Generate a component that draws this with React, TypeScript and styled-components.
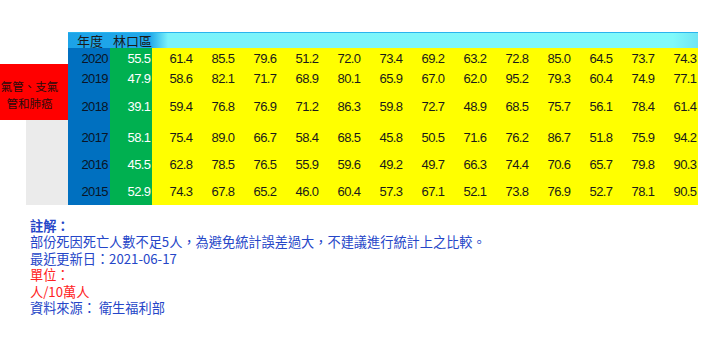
import React from 'react';
import styled, { createGlobalStyle } from 'styled-components';

const GlobalStyle = createGlobalStyle`
    html, body {
        margin: 0;
        padding: 0;
        background: #ffffff;
    }
`;

const COL = 42;

const years = [2020, 2019, 2018, 2017, 2016, 2015];
const local = ['55.5', '47.9', '39.1', '58.1', '45.5', '52.9'];
const rows = [
    ['61.4', '85.5', '79.6', '51.2', '72.0', '73.4', '69.2', '63.2', '72.8', '85.0', '64.5', '73.7', '74.3'],
    ['58.6', '82.1', '71.7', '68.9', '80.1', '65.9', '67.0', '62.0', '95.2', '79.3', '60.4', '74.9', '77.1'],
    ['59.4', '76.8', '76.9', '71.2', '86.3', '59.8', '72.7', '48.9', '68.5', '75.7', '56.1', '78.4', '61.4'],
    ['75.4', '89.0', '66.7', '58.4', '68.5', '45.8', '50.5', '71.6', '76.2', '86.7', '51.8', '75.9', '94.2'],
    ['62.8', '78.5', '76.5', '55.9', '59.6', '49.2', '49.7', '66.3', '74.4', '70.6', '65.7', '79.8', '90.3'],
    ['74.3', '67.8', '65.2', '46.0', '60.4', '57.3', '67.1', '52.1', '73.8', '76.9', '52.7', '78.1', '90.5'],
];
const rowHeights = [20, 20, 36, 26, 28, 27];

const Page = styled.div`
    padding-top: 32px;
    width: 720px;
    height: 364px;
    box-sizing: border-box;
`;

const TopRow = styled.div`
    display: flex;
    align-items: flex-start;
`;

const SideColumn = styled.div`
    display: flex;
    flex-direction: column;
    width: 68px;
    padding-top: 32px;
`;

const CauseBox = styled.div`
    height: 56px;
    background: #ff0000;
    color: #2a0c0c;
    font-family: "Noto Sans CJK TC", sans-serif;
    font-size: 11.5px;
    line-height: 17px;
    text-align: center;
    padding: 14px 9px 0 0;
    box-sizing: border-box;
    white-space: nowrap;
`;

const GreyBox = styled.div`
    height: 85px;
    margin-left: 26px;
    background: #ebebeb;
`;

const Table = styled.div`
    display: flex;
    flex-direction: column;
`;

const HeaderBar = styled.div`
    display: grid;
    grid-template-columns: ${COL}px ${COL}px ${COL * 13}px;
    height: 16px;
    box-sizing: border-box;
    border-top: 1px solid #2ab4ee;
    background: linear-gradient(to right, #1ca3e8 0, #20a8ea 82px, #7af2fa 100px, #80fafa 96%, #6fe4f4 100%);
    font-family: "Noto Sans CJK TC", sans-serif;
    font-size: 13px;
    line-height: 15px;
    color: #1a1a1a;
`;

const HeaderCell = styled.div<{ $align: 'left' | 'right' }>`
    text-align: ${({ $align }) => $align};
    padding-left: ${({ $align }) => ($align === 'left' ? '9px' : '0')};
    white-space: nowrap;
`;

const Grid = styled.div`
    display: grid;
    grid-template-columns: repeat(15, ${COL}px);
    grid-template-rows: ${rowHeights.map((h) => `${h}px`).join(' ')};
`;

const palette = {
    year: { bg: '#0070c0', fg: '#0a1426' },
    local: { bg: '#00b050', fg: '#ffffff' },
    value: { bg: '#ffff00', fg: '#1a1a1a' },
};

const Cell = styled.div<{ $kind: keyof typeof palette }>`
    display: flex;
    align-items: center;
    justify-content: flex-end;
    padding-right: ${({ $kind }) => ($kind === 'year' ? '2px' : '1.5px')};
    background: ${({ $kind }) => palette[$kind].bg};
    color: ${({ $kind }) => palette[$kind].fg};
    font-family: "Liberation Sans", Arial, sans-serif;
    font-size: 13px;
    letter-spacing: -0.6px;
`;

const Notes = styled.div`
    margin-top: 13px;
    padding-left: 30px;
    font-family: "Noto Sans CJK TC", sans-serif;
    font-size: 13.2px;
    line-height: 16.4px;
`;

const NoteLine = styled.div<{ $tone: 'blue' | 'red'; $bold?: boolean }>`
    color: ${({ $tone }) => ($tone === 'red' ? '#ff2222' : '#2546c8')};
    font-weight: ${({ $bold }) => ($bold ? 700 : 400)};
    white-space: nowrap;
`;

const App = () => (
    <Page>
        <GlobalStyle />
        <TopRow>
            <SideColumn>
                <CauseBox>
                    氣管、支氣
                    <br />
                    管和肺癌
                </CauseBox>
                <GreyBox />
            </SideColumn>
            <Table>
                <HeaderBar>
                    <HeaderCell $align="left">年度</HeaderCell>
                    <HeaderCell $align="right">林口區</HeaderCell>
                    <div />
                </HeaderBar>
                <Grid>
                    {years.map((year, i) => (
                        <React.Fragment key={year}>
                            <Cell $kind="year">{year}</Cell>
                            <Cell $kind="local">{local[i]}</Cell>
                            {rows[i].map((v, j) => (
                                <Cell key={j} $kind="value">{v}</Cell>
                            ))}
                        </React.Fragment>
                    ))}
                </Grid>
            </Table>
        </TopRow>
        <Notes>
            <NoteLine $tone="blue" $bold>註解：</NoteLine>
            <NoteLine $tone="blue">部份死因死亡人數不足5人，為避免統計誤差過大，不建議進行統計上之比較。</NoteLine>
            <NoteLine $tone="blue">最近更新日：2021-06-17</NoteLine>
            <NoteLine $tone="red">單位：</NoteLine>
            <NoteLine $tone="red">人/10萬人</NoteLine>
            <NoteLine $tone="blue">資料來源： 衛生福利部</NoteLine>
        </Notes>
    </Page>
);

export default App;
